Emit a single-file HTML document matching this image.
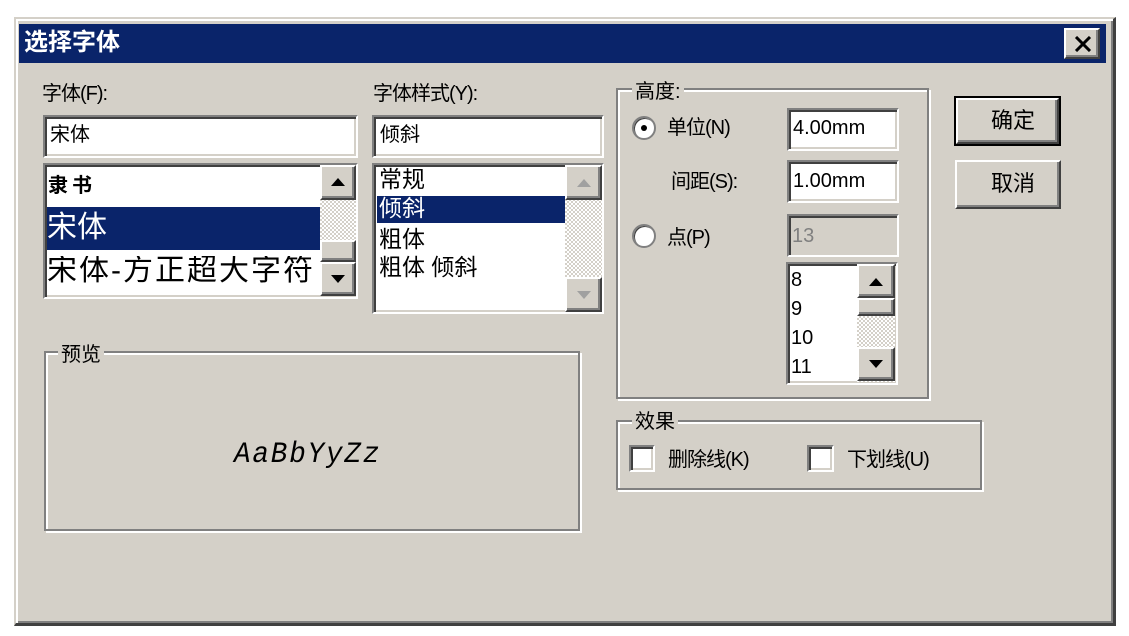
<!DOCTYPE html>
<html><head><meta charset="utf-8"><style>
*{margin:0;padding:0;box-sizing:border-box}
body{width:1129px;height:636px;background:#fff;position:relative;overflow:hidden;font-family:"Liberation Sans","Noto Sans CJK SC",sans-serif;color:#000}
.a{position:absolute}
.dlg{left:14px;top:17px;width:1102px;height:609px;background:#d4d0c8;border-top:2px solid #d4d0c8;border-left:2px solid #d4d0c8;border-right:3px solid #404040;border-bottom:3px solid #404040;box-shadow:inset 2px 2px 0 #fff,inset -2px -2px 0 #808080}
.t{white-space:nowrap;font-size:20px;line-height:1}
.sunk{background:#fff;border-top:2px solid #808080;border-left:2px solid #808080;border-right:2px solid #fff;border-bottom:2px solid #fff;box-shadow:inset 2px 2px 0 #404040,inset -2px -2px 0 #d4d0c8}
.btn{background:#d4d0c8;border-top:2px solid #fff;border-left:2px solid #fff;border-right:2px solid #404040;border-bottom:2px solid #404040;box-shadow:inset -2px -2px 0 #808080}
.grp{border:2px solid #808080;box-shadow:inset 2px 2px 0 #fff,2px 2px 0 #fff}
.lab{background:#d4d0c8;padding:0 3px}
.track{background-color:#eee;background-image:repeating-conic-gradient(#d4d0c8 0 25%,#fff 0 50%);background-size:4px 4px}
.tri{width:0;height:0;border-left:7px solid transparent;border-right:7px solid transparent}
.n{letter-spacing:-1px}
</style></head><body>
<div class="a dlg"></div>
<div class="a" style="left:19px;top:24px;width:1087px;height:39px;background:#0a246a"></div>
<div class="a t" style="left:24px;top:31px;color:#fff;font-weight:bold;font-size:24px">选择字体</div>
<div class="a btn" style="left:1064px;top:28px;width:36px;height:31px"><svg class="a" style="left:8px;top:6px" width="18" height="16"><path d="M2 1L16 15M16 1L2 15" stroke="#000" stroke-width="3"/></svg></div>

<div class="a t n" style="left:42px;top:84px">字体(F):</div>
<div class="a sunk" style="left:43px;top:115px;width:315px;height:43px"></div>
<div class="a t" style="left:50px;top:125px">宋体</div>
<div class="a sunk" style="left:43px;top:163px;width:315px;height:136px;overflow:hidden"></div>
<div class="a t" style="left:48px;top:176px;font-weight:bold;letter-spacing:4px">隶书</div>
<div class="a" style="left:47px;top:207px;width:273px;height:43px;background:#0a246a"></div>
<div class="a t" style="left:47px;top:213px;color:#fff;font-size:30px">宋体</div>
<div class="a t" style="left:47px;top:256px;font-size:30px;letter-spacing:2px;width:273px;overflow:hidden">宋体-方正超大字符</div>
<div class="a track" style="left:320px;top:165px;width:36px;height:131px"></div>
<div class="a btn" style="left:320px;top:165px;width:36px;height:35px"><div class="tri a" style="left:9px;top:11px;border-bottom:8px solid #000"></div></div>
<div class="a btn" style="left:320px;top:240px;width:36px;height:22px"></div>
<div class="a btn" style="left:320px;top:262px;width:36px;height:34px"><div class="tri a" style="left:9px;top:11px;border-top:8px solid #000"></div></div>

<div class="a t n" style="left:373px;top:84px">字体样式(Y):</div>
<div class="a sunk" style="left:372px;top:115px;width:232px;height:43px"></div>
<div class="a t" style="left:380px;top:125px">倾斜</div>
<div class="a sunk" style="left:372px;top:163px;width:232px;height:151px"></div>
<div class="a t" style="left:379px;top:168px;font-size:23px">常规</div>
<div class="a" style="left:377px;top:196px;width:188px;height:27px;background:#0a246a"></div>
<div class="a t" style="left:379px;top:197px;font-size:23px;color:#fff">倾斜</div>
<div class="a t" style="left:379px;top:228px;font-size:23px">粗体</div>
<div class="a t" style="left:379px;top:256px;font-size:23px">粗体 倾斜</div>
<div class="a track" style="left:565px;top:165px;width:37px;height:147px"></div>
<div class="a btn" style="left:565px;top:165px;width:37px;height:35px"><div class="tri a" style="left:10px;top:12px;border-bottom:8px solid #a0a0a0"></div></div>
<div class="a btn" style="left:565px;top:277px;width:37px;height:35px"><div class="tri a" style="left:10px;top:12px;border-top:8px solid #a0a0a0"></div></div>

<div class="a grp" style="left:616px;top:88px;width:313px;height:311px"></div>
<div class="a t lab" style="left:632px;top:82px">高度:</div>
<div class="a" style="left:632px;top:116px;width:24px;height:24px;border-radius:50%;background:#fff;border:2px solid #808080;box-shadow:inset 1px 1px 0 #404040"><div class="a" style="left:7px;top:7px;width:6px;height:6px;background:#000;border-radius:50%"></div></div>
<div class="a t n" style="left:667px;top:118px">单位(N)</div>
<div class="a sunk" style="left:787px;top:108px;width:112px;height:43px"></div>
<div class="a t" style="left:793px;top:118px">4.00mm</div>
<div class="a t n" style="left:671px;top:172px">间距(S):</div>
<div class="a sunk" style="left:787px;top:160px;width:112px;height:43px"></div>
<div class="a t" style="left:793px;top:171px">1.00mm</div>
<div class="a" style="left:632px;top:224px;width:24px;height:24px;border-radius:50%;background:#fff;border:2px solid #808080;box-shadow:inset 1px 1px 0 #404040"></div>
<div class="a t n" style="left:667px;top:228px">点(P)</div>
<div class="a sunk" style="left:787px;top:214px;width:112px;height:43px;background:#d4d0c8"></div>
<div class="a t" style="left:792px;top:226px;color:#808080">13</div>
<div class="a sunk" style="left:786px;top:262px;width:112px;height:123px"></div>
<div class="a t" style="left:791px;top:270px">8</div>
<div class="a t" style="left:791px;top:299px">9</div>
<div class="a t" style="left:791px;top:328px">10</div>
<div class="a t" style="left:791px;top:357px">11</div>
<div class="a track" style="left:857px;top:264px;width:38px;height:118px"></div>
<div class="a btn" style="left:857px;top:264px;width:38px;height:34px"><div class="tri a" style="left:10px;top:12px;border-bottom:8px solid #000"></div></div>
<div class="a btn" style="left:857px;top:298px;width:38px;height:18px"></div>
<div class="a btn" style="left:857px;top:347px;width:38px;height:34px"><div class="tri a" style="left:10px;top:11px;border-top:8px solid #000"></div></div>

<div class="a" style="left:954px;top:96px;width:107px;height:50px;border:2px solid #000"><div class="a btn" style="left:0;top:0;width:103px;height:46px"></div></div>
<div class="a t" style="left:991px;top:110px;font-size:22px">确定</div>
<div class="a btn" style="left:955px;top:160px;width:106px;height:49px"></div>
<div class="a t" style="left:991px;top:173px;font-size:22px">取消</div>

<div class="a grp" style="left:44px;top:351px;width:536px;height:180px"></div>
<div class="a t lab" style="left:58px;top:345px">预览</div>
<div class="a" style="left:234px;top:438px;font-family:'Liberation Mono',monospace;font-style:italic;font-size:30px;white-space:nowrap;letter-spacing:2px;transform:scaleX(0.92);transform-origin:left">AaBbYyZz</div>

<div class="a grp" style="left:616px;top:420px;width:366px;height:70px"></div>
<div class="a t lab" style="left:632px;top:412px">效果</div>
<div class="a sunk" style="left:629px;top:445px;width:26px;height:27px"></div>
<div class="a t n" style="left:668px;top:450px">删除线(K)</div>
<div class="a sunk" style="left:807px;top:445px;width:27px;height:27px"></div>
<div class="a t n" style="left:847px;top:450px">下划线(U)</div>
</body></html>
